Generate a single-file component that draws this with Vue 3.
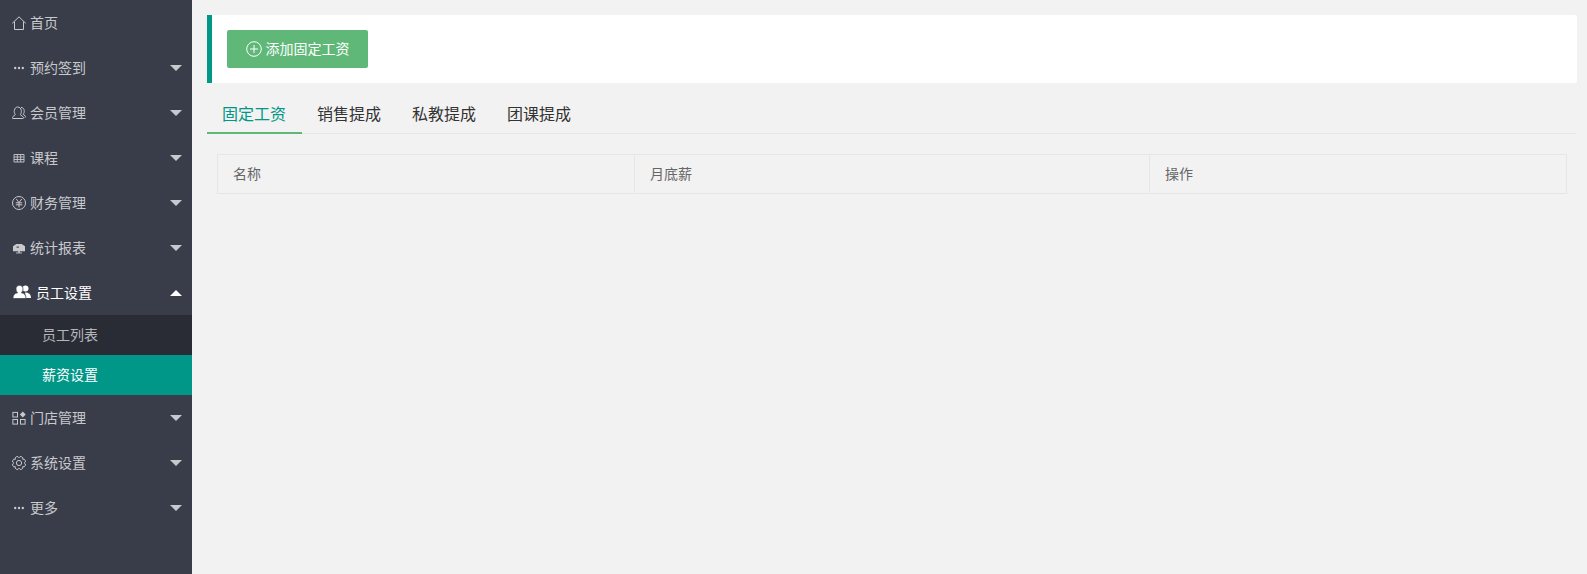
<script setup>
const menu = [
  { label: '首页', icon: 'home' },
  { label: '预约签到', icon: 'dots', arrow: true },
  { label: '会员管理', icon: 'user', arrow: true },
  { label: '课程', icon: 'table', arrow: true },
  { label: '财务管理', icon: 'rmb', arrow: true },
  { label: '统计报表', icon: 'report', arrow: true },
  { label: '员工设置', icon: 'group', arrow: true, open: true, children: [
    { label: '员工列表' },
    { label: '薪资设置', active: true }
  ] },
  { label: '门店管理', icon: 'app', arrow: true },
  { label: '系统设置', icon: 'gear', arrow: true },
  { label: '更多', icon: 'dots', arrow: true }
]
const tabs = ['固定工资', '销售提成', '私教提成', '团课提成']

const teeth = 8
let gearPath = ''
for (let i = 0; i < teeth; i++) {
  const a = (i / teeth) * Math.PI * 2
  const b = ((i + 1) / teeth) * Math.PI * 2
  const x0 = (7 + 5.2 * Math.cos(a)).toFixed(2)
  const y0 = (7 + 5.2 * Math.sin(a)).toFixed(2)
  const x1 = (7 + 5.2 * Math.cos(b)).toFixed(2)
  const y1 = (7 + 5.2 * Math.sin(b)).toFixed(2)
  gearPath += (i === 0 ? `M${x0} ${y0}` : '') + `A1.4 1.400 0 0 1 ${x1} ${y1}`
}
gearPath += 'Z'
</script>

<template>
  <div class="page">
    <aside class="side">
      <template v-for="item in menu" :key="item.label">
        <div class="item" :class="{ open: item.open }">
          <svg v-if="item.open" class="ico big" viewBox="0 0 18 14">
            <circle cx="12.500" cy="3.600" r="3" fill="#fff" />
            <path d="M12 7.500c3.600 0 6 1.700 6 5.500h-5z" fill="#fff" />
            <path d="M6.500.3c2.100 0 3.500 1.500 3.500 3.600S8.900 7 8.400 7.800c2.800.5 4.600 2 4.600 5.700H0c0-3.700 1.800-5.200 4.600-5.700C4.100 7 3 6 3 3.900S4.400.3 6.500.3z" fill="#fff" stroke="#393d49" stroke-width=".7" />
          </svg>
          <svg v-else class="ico" viewBox="0 0 14 14" fill="none" stroke="#c8c9cd" stroke-width="1">
            <path v-if="item.icon === 'home'" d="M.3 7.300 7 .8l6.700 6.500M2.500 5.600v7.900h9V5.600" />
            <g v-else-if="item.icon === 'dots'" fill="#c8c9cd" stroke="none">
              <circle cx="3.200" cy="7" r="1.200" /><circle cx="7" cy="7" r="1.200" /><circle cx="10.800" cy="7" r="1.200" />
            </g>
            <g v-else-if="item.icon === 'user'">
              <path d="M3.300 8.600C2.400 7.500 2.100 6 2.300 4.600 2.600 2.300 4 1 5.800 1s3.200 1.300 3.500 3.600c.2 1.400-.1 2.900-1 4l3 2.400c.5.500.3 1.500-.4 1.500H.9c-.7 0-.9-1-.4-1.500z" />
              <path d="M9 1.300c1.900.2 3 1.500 3.200 3.300.2 1.400-.2 2.700-1 3.700l2 1.600c.5.500.4 1.600-.4 1.600" />
            </g>
            <path v-else-if="item.icon === 'table'" d="M2 3.500h10v7.500H2zM2 6h10M2 8.500h10M5.300 3.500V11M8.700 3.500V11" stroke-width=".9" />
            <g v-else-if="item.icon === 'rmb'">
              <circle cx="7" cy="7" r="6.500" />
              <path d="M4.300 3 7 6.600 9.700 3M3.800 6.800h6.400M3.800 8.800h6.400M7 6.600v4.800" />
            </g>
            <g v-else-if="item.icon === 'report'" fill="#c8c9cd" stroke="none">
              <path d="M1 5.200 4.300 3h5.400L13 5.200v5H1z" />
              <rect x="6" y="10.200" width="2" height="1.500" />
              <rect x="4" y="11.500" width="6" height=".9" />
              <rect x="4.500" y="5.600" width="2.500" height="1" fill="#393d49" />
            </g>
            <g v-else-if="item.icon === 'app'">
              <rect x=".9" y="1.400" width="4.600" height="4.600" />
              <rect x=".9" y="8.500" width="4.600" height="4.600" />
              <rect x="8.500" y="8.500" width="4.600" height="4.600" />
              <path d="M10.800.6 13.700 3.600 10.800 6.600 7.900 3.600z" fill="#c8c9cd" stroke="none" />
            </g>
            <g v-else-if="item.icon === 'gear'">
              <path :d="gearPath" />
              <circle cx="7" cy="7" r="2.600" />
            </g>
          </svg>
          <span class="label">{{ item.label }}</span>
          <i v-if="item.arrow" class="arrow" />
        </div>
        <div v-if="item.children" class="sub">
          <div v-for="c in item.children" :key="c.label" class="sub-item" :class="{ active: c.active }">{{ c.label }}</div>
        </div>
      </template>
    </aside>

    <main class="main">
      <div class="quote">
        <button class="btn" type="button">
          <svg class="plus" viewBox="0 0 16 16" fill="none" stroke="#fff" stroke-width="1">
            <circle cx="8" cy="8" r="7.300" />
            <path d="M8 4v8M4 8h8" />
          </svg>
          <span class="btn-text">添加固定工资</span>
        </button>
      </div>

      <div class="tabs">
        <div v-for="(t, i) in tabs" :key="t" class="tab" :class="{ on: i === 0 }">{{ t }}</div>
      </div>

      <div class="table">
        <div class="cell c1">名称</div>
        <div class="cell c2">月底薪</div>
        <div class="cell c3">操作</div>
      </div>
    </main>
  </div>
</template>

<style>
html, body { margin: 0; background: #f2f2f2; }
</style>

<style scoped>
.page {
  display: flex;
  width: 1587px;
  height: 574px;
  overflow: hidden;
  background: #f2f2f2;
  font-family: "Noto Sans CJK SC", "Noto Sans", sans-serif;
  font-size: 14px;
}
.side {
  width: 192px;
  flex: none;
  background: #393d49;
}
.item {
  position: relative;
  display: flex;
  align-items: center;
  height: 45px;
  padding-left: 12px;
  color: #c8c9cd;
}
.item.open { color: #fff; padding-left: 13px; }
.ico { width: 14px; height: 14px; margin-right: 4px; flex: none; }
.ico.big { width: 18px; height: 14px; margin-right: 5px; margin-top: -2px; }
.label { line-height: 20px; margin-top: -2px; }
.arrow {
  position: absolute;
  right: 10px;
  top: 20px;
  border-style: solid;
  border-width: 6px 6px 0;
  border-color: #c8c9cd transparent transparent;
}
.open .arrow {
  border-width: 0 6px 6px;
  border-color: transparent transparent #fff;
}
.sub { background: #2a2c35; }
.sub-item {
  height: 40px;
  line-height: 38px;
  padding-left: 42px;
  color: #b5b6ba;
}
.sub-item.active { background: #009688; color: #fff; }
.main {
  flex: 1;
  min-width: 0;
  padding: 15px 10px 0 15px;
}
.quote {
  display: flex;
  align-items: center;
  height: 68px;
  padding-left: 15px;
  background: #fff;
  border-left: 5px solid #009688;
  border-radius: 0 2px 2px 0;
  box-sizing: border-box;
}
.btn {
  display: flex;
  align-items: center;
  justify-content: center;
  width: 141px;
  height: 38px;
  padding: 0;
  border: 0;
  border-radius: 2px;
  background: #5fb878;
  color: #fff;
  font: inherit;
}
.btn-text { margin-top: -2px; }
.plus { width: 16px; height: 16px; margin-right: 4px; }
.tabs {
  display: flex;
  height: 40px;
  margin-top: 10px;
  margin-right: 1px;
  border-bottom: 1px solid #e6e6e6;
}
.tab {
  height: 41px;
  line-height: 40px;
  padding: 0 16px 0 15px;
  font-size: 16px;
  color: #333;
  box-sizing: border-box;
}
.tab.on {
  color: #009688;
  border-bottom: 2px solid #5fb878;
}
.table {
  display: grid;
  grid-template-columns: 416px 515px 1fr;
  height: 40px;
  margin: 20px 10px 0;
  border: 1px solid #e6e6e6;
  box-sizing: border-box;
  color: #666;
}
.cell {
  line-height: 37px;
  padding-left: 15px;
}
.c2, .c3 { border-left: 1px solid #e6e6e6; }
</style>
